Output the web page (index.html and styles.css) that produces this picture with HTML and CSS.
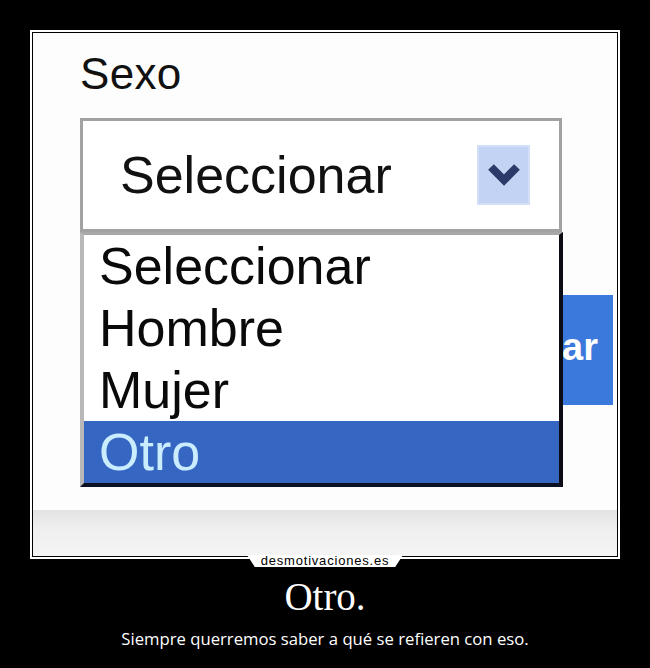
FILE: index.html
```html
<!DOCTYPE html>
<html lang="es">
<head>
  <meta charset="UTF-8" />
  <meta name="viewport" content="width=device-width, initial-scale=1" />
  <title>Otro.</title>
  <link rel="stylesheet" href="styles.css">
</head>
<body>
  <div class="poster">
    <div class="frame">
      <div class="shot">
        <div class="form">
          <div class="field-label">Sexo</div>
          <div class="select">
            <span class="select-value">Seleccionar</span>
            <span class="select-arrow">
              <svg width="34" height="24" viewBox="0 0 34 24">
                <polyline points="4,4 17,17 30,4" fill="none" stroke="#2b3a68" stroke-width="8" stroke-linejoin="miter" />
              </svg>
            </span>
          </div>
          <ul class="options">
            <li>Seleccionar</li>
            <li>Hombre</li>
            <li>Mujer</li>
            <li class="active">Otro</li>
          </ul>
          <div class="actions">
            <button class="submit">Enviar</button>
          </div>
        </div>
        <div class="band"></div>
      </div>
      <div class="brand">desmotivaciones.es</div>
    </div>
    <h1 class="title">Otro.</h1>
    <p class="caption">Siempre querremos saber a qué se refieren con eso.</p>
  </div>
</body>
</html>
```

FILE: styles.css
```css
* { box-sizing: border-box; }
body {
  margin: 0;
  background: #000;
  color: #fff;
  font-family: "Liberation Sans", Arial, sans-serif;
}
.poster {
  width: 650px;
  height: 668px;
  padding-top: 30px;
  display: flex;
  flex-direction: column;
  align-items: center;
}
.frame {
  position: relative;
  width: 590px;
  border: 2px solid #fff;
  padding: 1px;
  background: #000;
}
.shot {
  height: 523px;
  background: #fdfdfd;
  color: #111;
  display: flex;
  flex-direction: column;
}
.form {
  position: relative;
  flex: 1;
  padding: 19px 4px 0 47px;
}
.field-label {
  font-size: 44px;
  line-height: 44px;
  letter-spacing: 0.3px;
}
.select {
  margin-top: 22px;
  width: 482px;
  height: 114px;
  border: 3px solid #a2a2a2;
  background: #fff;
  display: flex;
  align-items: center;
  justify-content: space-between;
  padding: 0 29px 0 37px;
}
.select-value {
  font-size: 52px;
  line-height: 62px;
}
.select-arrow {
  width: 53px;
  height: 60px;
  background: #c3d3f3;
  border: 2px solid #d3dff7;
  display: flex;
  align-items: center;
  justify-content: center;
}
.options {
  position: absolute;
  left: 47px;
  top: 199px;
  width: 483px;
  margin: 0;
  padding: 0;
  list-style: none;
  background: #fff;
  border-top: 3px solid #a8a8a8;
  border-left: 4px solid #b8b8b8;
  border-right: 4px solid #0c0c14;
  border-bottom: 4px solid #0c1020;
  z-index: 2;
}
.options li {
  height: 62px;
  font-size: 52px;
  line-height: 62px;
  padding-left: 15px;
  color: #0a0a0a;
}
.options li.active {
  background: #3466c2;
  color: #c9ecff;
}
.actions {
  margin-top: 63px;
  display: flex;
  justify-content: flex-end;
}
.submit {
  width: 160px;
  height: 110px;
  border: none;
  background: #3b79dd;
  color: #fff;
  font-family: "Liberation Sans", Arial, sans-serif;
  font-weight: bold;
  font-size: 38px;
  text-align: right;
  padding: 0 15px 6px 0;
}
.band {
  height: 46px;
  background: linear-gradient(#e3e3e3, #efefef 40%, #f4f4f4);
}
.brand {
  position: absolute;
  left: 50%;
  bottom: -10px;
  transform: translateX(-50%);
  width: 156px;
  height: 12px;
  background: #fff;
  clip-path: polygon(0 0, 100% 0, 95% 100%, 5% 100%);
  color: #000;
  font-size: 13px;
  line-height: 11px;
  letter-spacing: 0.8px;
  text-align: center;
}
.title {
  margin: 18px 0 0;
  font-family: "Liberation Serif", "Times New Roman", serif;
  font-weight: normal;
  font-size: 39px;
  line-height: 39px;
}
.caption {
  margin: 13px 0 0;
  font-family: "Open Sans", "Liberation Sans", sans-serif;
  font-size: 16.7px;
  line-height: 20px;
}
```
